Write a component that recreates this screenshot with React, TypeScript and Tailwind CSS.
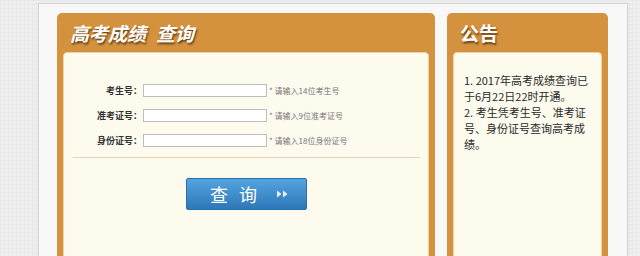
import React from "react";

const cjk = "font-['Microsoft_YaHei','Noto_Sans_CJK_SC',sans-serif]";

function Row({ label, hint }: { label: string; hint: string }) {
  return (
    <div className="flex items-center h-[13px]">
      <div className="w-[78px] text-right text-[9px] font-bold text-[#333] leading-[13px]">{label}</div>
      <div className="ml-[1px] w-[124px] h-[13px] bg-white border border-[#bdbdbd]" />
      <div className="ml-[2px] text-[8px] text-[#777] leading-[13px] whitespace-nowrap">* 请输入{hint}</div>
    </div>
  );
}

export default function App() {
  return (
    <div
      className={`w-[640px] h-[256px] overflow-hidden bg-[#efefef] bg-[linear-gradient(to_right,#e8e8e8_1px,transparent_1px),linear-gradient(to_bottom,#e8e8e8_1px,transparent_1px)] bg-[size:4px_4px] pt-[3px] pl-[38px] ${cjk}`}
    >
      <div className="w-[590px] h-[270px] border border-[#d4d4d4] bg-[#f8f8f8] pt-[9px] pl-[18px] pr-[19px] flex gap-[12px]">
        {/* Left panel */}
        <div className="w-[378px] h-[260px] rounded-t-[5px] bg-[#d4923e] px-[6px] flex flex-col">
          <div className="h-[39px] flex items-center pl-[7px] text-white text-[19px] font-bold italic leading-none [text-shadow:1px_2px_2px_rgba(60,30,0,0.7)]">
            <span>高考成绩</span>
            <span className="ml-[10px]">查询</span>
          </div>
          <div className="flex-1 bg-[#fdfaee] rounded-t-[4px] border border-[#ecd3a5] pt-[31px]">
            <div className="flex flex-col gap-[12px]">
              <Row label="考生号：" hint="14位考生号" />
              <Row label="准考证号：" hint="9位准考证号" />
              <Row label="身份证号：" hint="18位身份证号" />
            </div>
            <div className="mt-[10px] ml-[9px] mr-[8px] h-px bg-[#e0d5b5]" />
            <div className="mt-[20px] mx-auto w-[121px] h-[32px] rounded-[2px] bg-[linear-gradient(to_bottom,#53a5df,#2e77b9)] border border-[#2a6eab] flex items-center justify-center pl-[6px] text-white">
              <span className="text-[18px] leading-none">查</span>
              <span className="ml-[11px] text-[18px] leading-none">询</span>
              <svg className="ml-[20px]" width="11" height="8" viewBox="0 0 11 8">
                <polygon points="0,0.5 4.5,4 0,7.5" fill="#e8f2fb" />
                <polygon points="6,0.5 10.5,4 6,7.5" fill="#e8f2fb" />
              </svg>
            </div>
          </div>
        </div>
        {/* Right panel */}
        <div className="w-[161px] h-[260px] rounded-t-[5px] bg-[#d4923e] px-[6px] flex flex-col">
          <div className="h-[39px] flex items-center pl-[7px]">
            <span className="text-white text-[19px] font-bold leading-none [text-shadow:1px_2px_2px_rgba(60,30,0,0.7)]">
              公告
            </span>
          </div>
          <div className="flex-1 bg-[#fdfaee] rounded-t-[4px] border border-[#ecd3a5] pt-[19px] pl-[10px] pr-[7px]">
            <p className="w-[130px] text-[11px] leading-[16px] text-[#2a2a2a]">
              1. 2017年高考成绩查询已于6月22日22时开通。
              <br />
              2. 考生凭考生号、准考证号、身份证号查询高考成绩。
            </p>
          </div>
        </div>
      </div>
    </div>
  );
}
